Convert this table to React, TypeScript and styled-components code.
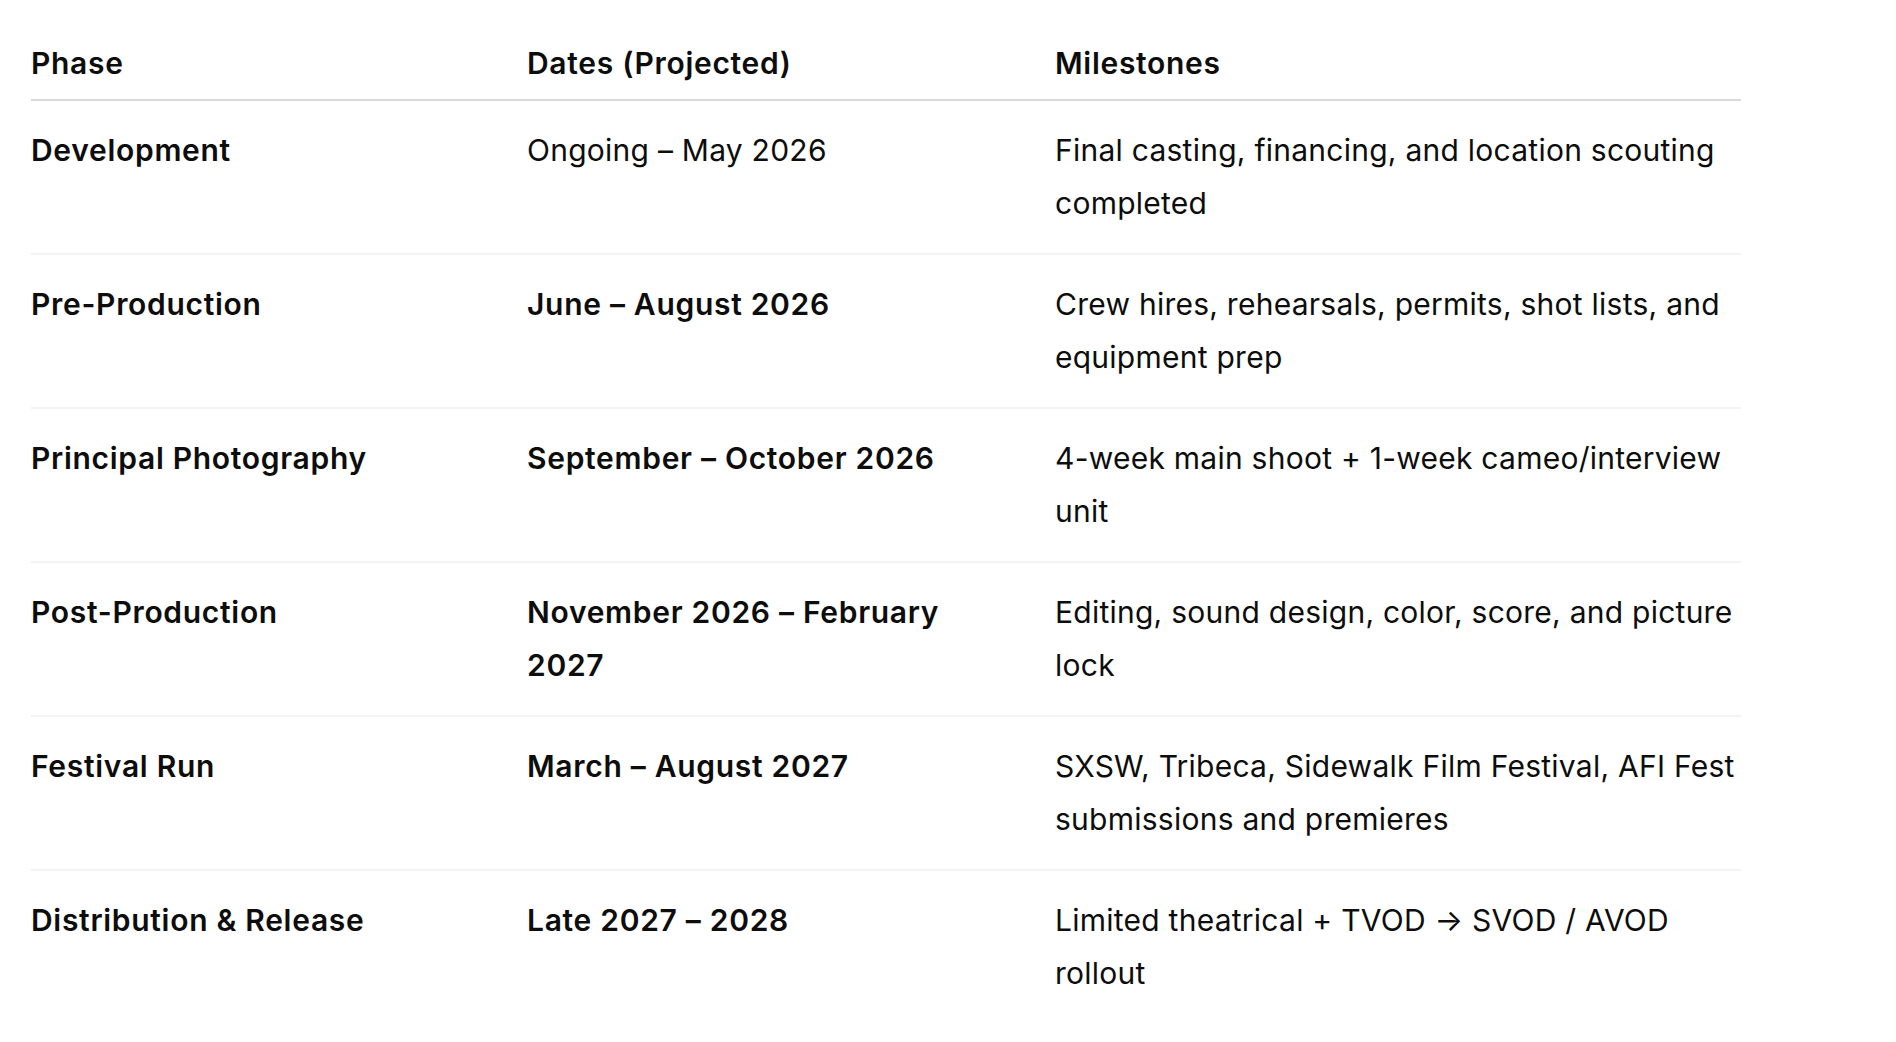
import React from 'react';
import styled, { createGlobalStyle } from 'styled-components';

type Phase = {
  phase: string;
  dates: string;
  datesBold: boolean;
  milestones: string;
};

const phases: Phase[] = [
  {
    phase: 'Development',
    dates: 'Ongoing – May 2026',
    datesBold: false,
    milestones: 'Final casting, financing, and location scouting completed',
  },
  {
    phase: 'Pre-Production',
    dates: 'June – August 2026',
    datesBold: true,
    milestones: 'Crew hires, rehearsals, permits, shot lists, and equipment prep',
  },
  {
    phase: 'Principal Photography',
    dates: 'September – October 2026',
    datesBold: true,
    milestones: '4-week main shoot + 1-week cameo/interview unit',
  },
  {
    phase: 'Post-Production',
    dates: 'November 2026 – February 2027',
    datesBold: true,
    milestones: 'Editing, sound design, color, score, and picture lock',
  },
  {
    phase: 'Festival Run',
    dates: 'March – August 2027',
    datesBold: true,
    milestones: 'SXSW, Tribeca, Sidewalk Film Festival, AFI Fest submissions and premieres',
  },
  {
    phase: 'Distribution & Release',
    dates: 'Late 2027 – 2028',
    datesBold: true,
    milestones: 'Limited theatrical + TVOD → SVOD / AVOD rollout',
  },
];

const App: React.FC = () => {
  return (
    <>
      <GlobalStyle />
      <Wrapper>
        <Table>
          <colgroup>
            <col style={{ width: 496 }} />
            <col style={{ width: 528 }} />
            <col style={{ width: 686 }} />
          </colgroup>
          <thead>
            <tr>
              <HeadCell>Phase</HeadCell>
              <HeadCell>Dates (Projected)</HeadCell>
              <HeadCell>Milestones</HeadCell>
            </tr>
          </thead>
          <tbody>
            {phases.map(p => (
              <Row key={p.phase}>
                <Cell $bold>{p.phase}</Cell>
                <Cell $bold={p.datesBold} $padRight={40}>{p.dates}</Cell>
                <Cell>{p.milestones}</Cell>
              </Row>
            ))}
          </tbody>
        </Table>
      </Wrapper>
    </>
  );
};

export default App;

// ==================== Styled Components ====================
const GlobalStyle = createGlobalStyle`
  html, body {
    margin: 0;
    padding: 0;
    background: #ffffff;
  }

  body {
    font-family: Inter, "Noto Sans", "Liberation Sans", sans-serif;
    color: #0d0d0d;
    -webkit-font-smoothing: antialiased;
  }
`;

const Wrapper = styled.div`
  padding: 37px 0 0 31px;
`;

const Table = styled.table`
  width: 1710px;
  table-layout: fixed;
  border-collapse: collapse;
  font-size: 30px;
  line-height: 53px;
`;

const HeadCell = styled.th`
  text-align: left;
  font-weight: 600;
  letter-spacing: 0.7px;
  padding: 0 0 9px 0;
  border-bottom: 2px solid #d9d9d9;
`;

const Row = styled.tr`
  border-bottom: 2px solid #f3f3f3;

  &:last-child {
    border-bottom: none;
  }
`;

const Cell = styled.td<{ $bold?: boolean; $padRight?: number }>`
  vertical-align: top;
  padding: 23px ${p => p.$padRight ?? 0}px 23px 0;
  font-weight: ${p => (p.$bold ? 600 : 400)};
  letter-spacing: ${p => (p.$bold ? '0.7px' : '0.25px')};
`;
